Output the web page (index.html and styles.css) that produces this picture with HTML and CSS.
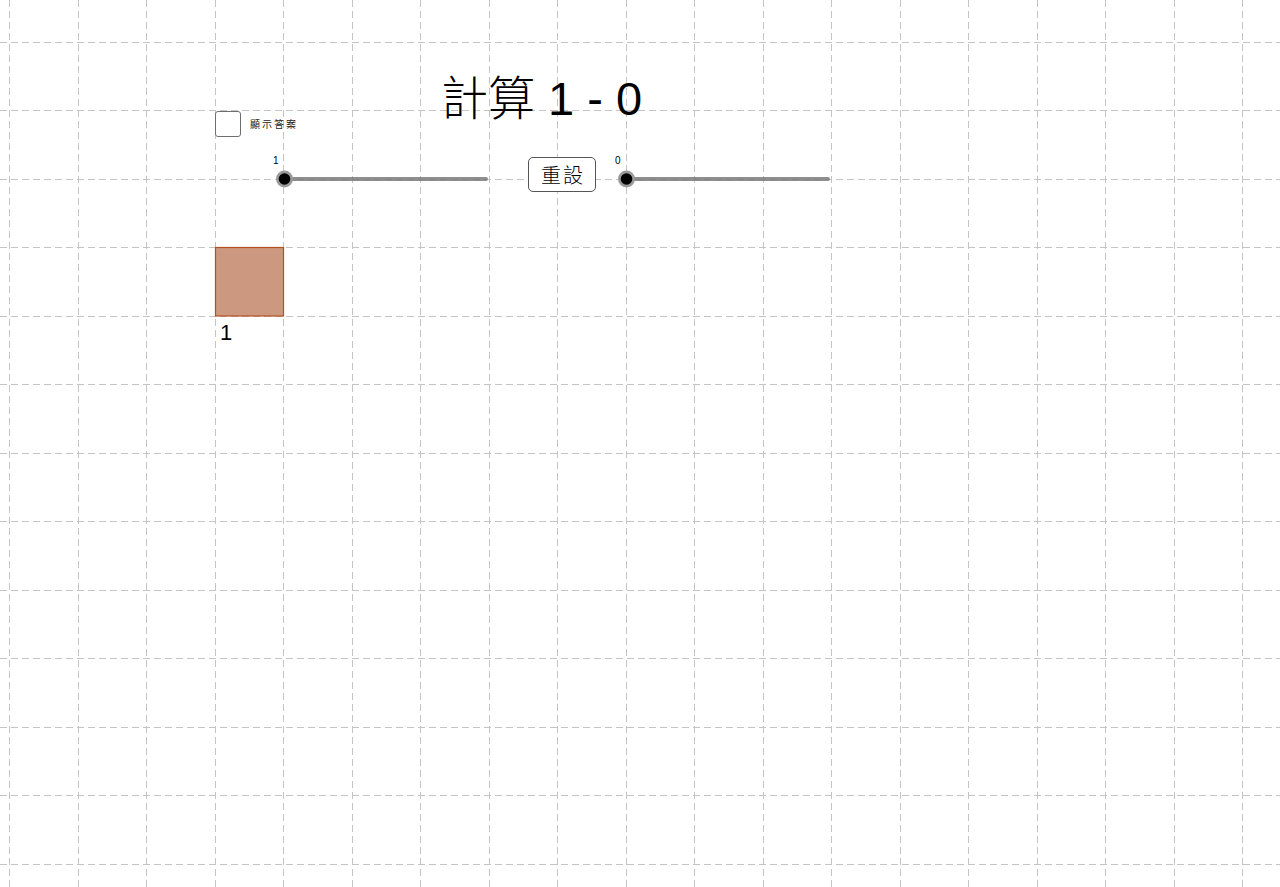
FILE: index.html
```html
<!DOCTYPE html>
<html lang="zh-Hant">
<head>
<meta charset="utf-8">
<title>計算 1 - 0</title>
<link rel="stylesheet" href="styles.css">
</head>
<body>
<div class="canvas">
  <svg class="grid" width="1280" height="887" viewBox="0 0 1280 887" xmlns="http://www.w3.org/2000/svg">
    <g class="gridlines" stroke="#c4c4c4" stroke-width="1" stroke-dasharray="7 4" fill="none">
      <line x1="9.5" y1="0" x2="9.5" y2="887"/>
      <line x1="78.5" y1="0" x2="78.5" y2="887"/>
      <line x1="146.5" y1="0" x2="146.5" y2="887"/>
      <line x1="215.5" y1="0" x2="215.5" y2="887"/>
      <line x1="283.5" y1="0" x2="283.5" y2="887"/>
      <line x1="352.5" y1="0" x2="352.5" y2="887"/>
      <line x1="420.5" y1="0" x2="420.5" y2="887"/>
      <line x1="489.5" y1="0" x2="489.5" y2="887"/>
      <line x1="557.5" y1="0" x2="557.5" y2="887"/>
      <line x1="626.5" y1="0" x2="626.5" y2="887"/>
      <line x1="694.5" y1="0" x2="694.5" y2="887"/>
      <line x1="763.5" y1="0" x2="763.5" y2="887"/>
      <line x1="831.5" y1="0" x2="831.5" y2="887"/>
      <line x1="900.5" y1="0" x2="900.5" y2="887"/>
      <line x1="968.5" y1="0" x2="968.5" y2="887"/>
      <line x1="1037.5" y1="0" x2="1037.5" y2="887"/>
      <line x1="1105.5" y1="0" x2="1105.5" y2="887"/>
      <line x1="1174.5" y1="0" x2="1174.5" y2="887"/>
      <line x1="1242.5" y1="0" x2="1242.5" y2="887"/>
      <line x1="0" y1="42.5" x2="1280" y2="42.5"/>
      <line x1="0" y1="110.5" x2="1280" y2="110.5"/>
      <line x1="0" y1="179.5" x2="1280" y2="179.5"/>
      <line x1="0" y1="247.5" x2="1280" y2="247.5"/>
      <line x1="0" y1="316.5" x2="1280" y2="316.5"/>
      <line x1="0" y1="384.5" x2="1280" y2="384.5"/>
      <line x1="0" y1="453.5" x2="1280" y2="453.5"/>
      <line x1="0" y1="521.5" x2="1280" y2="521.5"/>
      <line x1="0" y1="590.5" x2="1280" y2="590.5"/>
      <line x1="0" y1="658.5" x2="1280" y2="658.5"/>
      <line x1="0" y1="727.5" x2="1280" y2="727.5"/>
      <line x1="0" y1="795.5" x2="1280" y2="795.5"/>
      <line x1="0" y1="864.5" x2="1280" y2="864.5"/>
    </g>
    <rect x="215.5" y="247.5" width="68" height="68.5" fill="#cc9980" stroke="#b4501e" stroke-width="1.2"/>
    <g class="slider">
      <line x1="284" y1="179" x2="486" y2="179" stroke="#7a7a7a" stroke-opacity="0.85" stroke-width="4" stroke-linecap="round"/>
      <circle cx="284.5" cy="179" r="8.5" fill="#9a9a9a"/>
      <circle cx="284.5" cy="179" r="5.8" fill="#000"/>
    </g>
    <g class="slider">
      <line x1="626" y1="179" x2="828" y2="179" stroke="#7a7a7a" stroke-opacity="0.85" stroke-width="4" stroke-linecap="round"/>
      <circle cx="626.5" cy="179" r="8.5" fill="#9a9a9a"/>
      <circle cx="626.5" cy="179" r="5.8" fill="#000"/>
    </g>
  </svg>

  <div class="title"><span class="cjk">計算</span> <span class="num">1 - 0</span></div>

  <label class="check">
    <span class="box"></span>
    <span class="check-label">顯示答案</span>
  </label>

  <span class="slider-value slider-value-a">1</span>
  <span class="slider-value slider-value-b">0</span>

  <button class="reset" type="button">重設</button>

  <span class="square-label">1</span>
</div>
</body>
</html>
```

FILE: styles.css
```css
html, body {
  margin: 0;
  padding: 0;
  background: #ffffff;
  overflow: hidden;
}

.canvas {
  position: relative;
  width: 1280px;
  height: 887px;
  background: #ffffff;
  font-family: "Liberation Sans", Arial, sans-serif;
  color: #000;
}

.grid {
  position: absolute;
  left: 0;
  top: 0;
  display: block;
}

.title {
  position: absolute;
  left: 441px;
  top: 68px;
  font-size: 47px;
  line-height: 54px;
  white-space: nowrap;
}

.title .cjk {
  font-family: "Noto Sans CJK TC", "Noto Sans CJK SC", sans-serif;
  font-weight: 300;
}

.title .num {
  font-family: "Liberation Sans", Arial, sans-serif;
}

.check {
  position: absolute;
  left: 215px;
  top: 111px;
  display: flex;
  align-items: center;
  gap: 9px;
}

.box {
  width: 24px;
  height: 24px;
  border: 1px solid #6e6e6e;
  border-radius: 3px;
  background: #fff;
}

.check-label {
  font-family: "Noto Sans CJK TC", "Noto Sans CJK SC", sans-serif;
  font-size: 10px;
  letter-spacing: 2px;
  color: #222;
  margin-top: -1px;
}

.slider-value {
  position: absolute;
  top: 155px;
  font-size: 10px;
  line-height: 12px;
  color: #000;
}

.slider-value-a { left: 273px; }
.slider-value-b { left: 615px; }

.reset {
  position: absolute;
  left: 528px;
  top: 157px;
  width: 68px;
  height: 35px;
  padding: 0;
  margin: 0;
  border: 1px solid #555;
  border-radius: 5px;
  background: #fff;
  font-family: "Noto Sans CJK TC", "Noto Sans CJK SC", sans-serif;
  font-weight: 300;
  font-size: 20px;
  letter-spacing: 2px;
  line-height: 33px;
  color: #000;
  text-align: center;
  text-indent: 2px;
}

.square-label {
  position: absolute;
  left: 220px;
  top: 320px;
  font-size: 22px;
  line-height: 26px;
}
```
